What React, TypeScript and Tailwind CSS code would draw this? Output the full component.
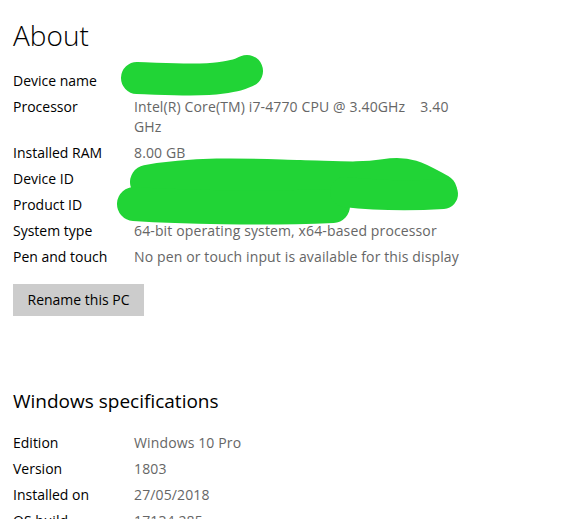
import React from "react";

const font = { fontFamily: '"Open Sans", "Noto Sans", sans-serif' };

function Row({ label, value }: { label: string; value: React.ReactNode }) {
  return (
    <>
      <div className="text-black">{label}</div>
      <div className="text-[#666666] tracking-[0.13px]">{value}</div>
    </>
  );
}

export default function App() {
  return (
    <div
      className="relative w-[579px] h-[519px] overflow-hidden bg-white pl-[13px] text-[14px] leading-[20px]"
      style={font}
    >
      <h1 className="pt-[17px] text-[28px] leading-[36px] font-light text-black">About</h1>

      <div className="mt-[18px] grid grid-cols-[121px_1fr] gap-y-[6px]">
        <Row label="Device name" value={<span>&nbsp;</span>} />
        <Row
          label="Processor"
          value={
            <>
              Intel(R) Core(TM) i7-4770 CPU @ 3.40GHz&nbsp;&nbsp;&nbsp; 3.40
              <br />
              GHz
            </>
          }
        />
        <Row label="Installed RAM" value="8.00 GB" />
        <Row label="Device ID" value={<span>&nbsp;</span>} />
        <Row label="Product ID" value={<span>&nbsp;</span>} />
        <Row label="System type" value="64-bit operating system, x64-based processor" />
        <Row label="Pen and touch" value="No pen or touch input is available for this display" />
      </div>

      <button className="mt-[17px] flex h-[32px] w-[131px] items-center justify-center bg-[#cccccc] text-black">
        Rename this PC
      </button>

      <h2 className="mt-[71px] text-[19px] leading-[28px] text-black">Windows specifications</h2>

      <div className="mt-[18px] grid grid-cols-[121px_1fr] gap-y-[6px]">
        <Row label="Edition" value="Windows 10 Pro" />
        <Row label="Version" value="1803" />
        <Row label="Installed on" value="27/05/2018" />
        <Row label="OS build" value="17134.285" />
      </div>

      <svg
        className="pointer-events-none absolute left-0 top-0"
        width="579"
        height="519"
        viewBox="0 0 579 519"
      >
        <g fill="none" stroke="#21d436" strokeLinecap="round" strokeLinejoin="round">
          <path d="M137 78 C 170 79, 200 81, 220 78 S 240 74, 247 71" strokeWidth="32" />
          <path d="M147 182 C 200 172, 260 176, 300 177 S 360 180, 385 176 S 420 180, 440 191" strokeWidth="34" />
          <path d="M134 204 C 180 207, 260 209, 333 206" strokeWidth="34" />
          <path d="M345 192 C 380 196, 410 196, 443 194" strokeWidth="30" />
        </g>
      </svg>
    </div>
  );
}
